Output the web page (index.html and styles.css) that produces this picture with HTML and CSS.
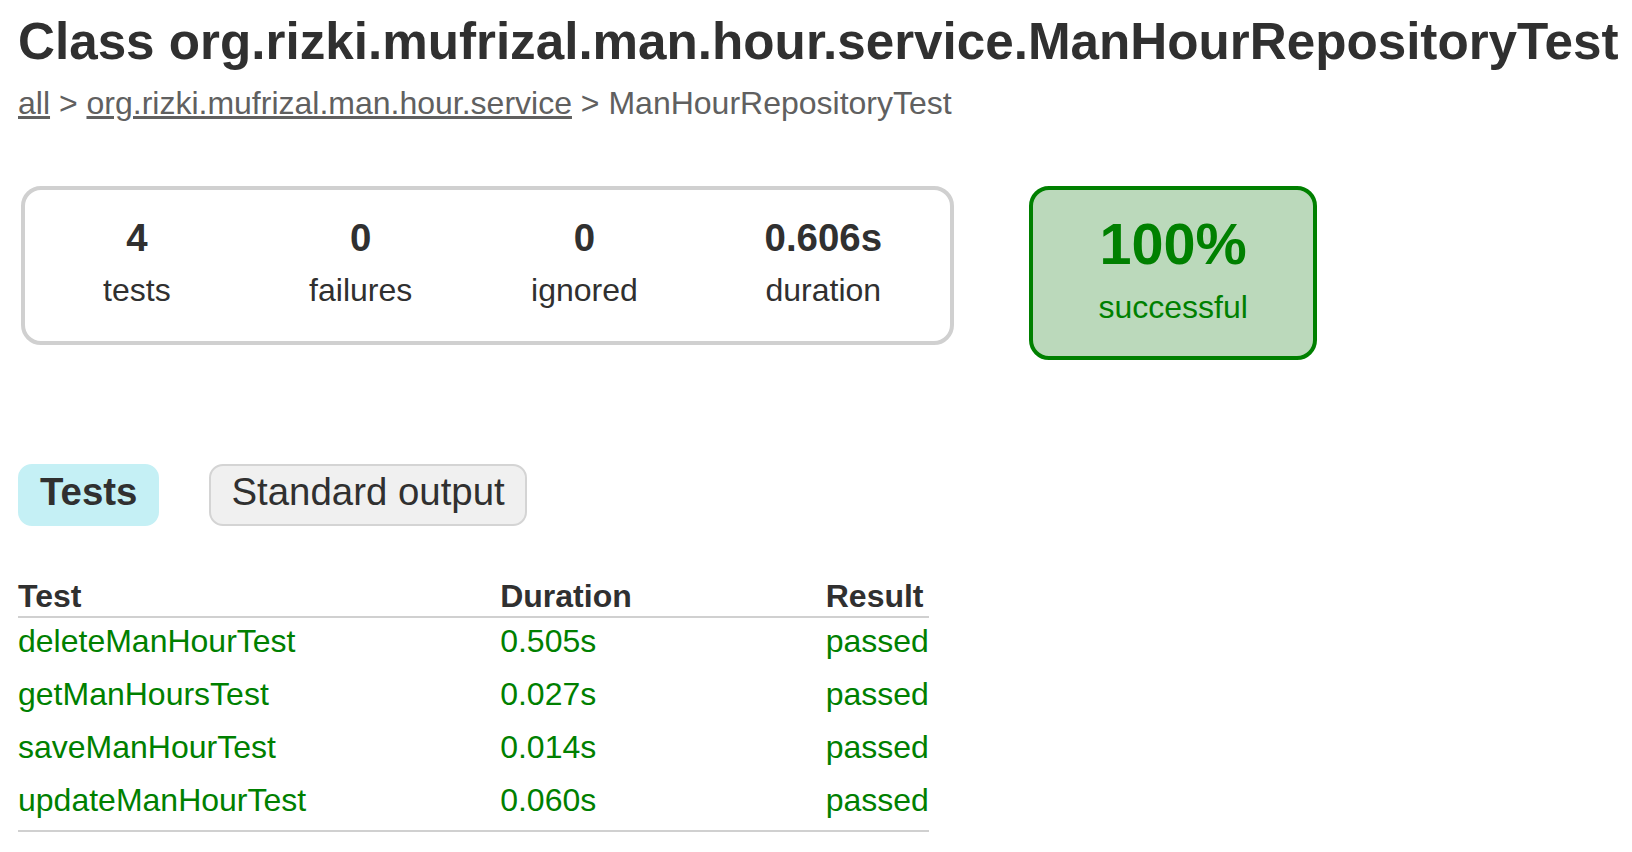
FILE: index.html
```
<!DOCTYPE html>
<html lang="en">
<head>
<meta charset="utf-8">
<title>Test results - Class org.rizki.mufrizal.man.hour.service.ManHourRepositoryTest</title>
<link rel="stylesheet" href="styles.css">
</head>
<body>
<div class="content">
  <h1 class="title">Class org.rizki.mufrizal.man.hour.service.ManHourRepositoryTest</h1>
  <div class="breadcrumbs"><a href="#">all</a> &gt; <a href="#">org.rizki.mufrizal.man.hour.service</a> &gt; ManHourRepositoryTest</div>

  <div class="summary">
    <div class="summary-group">
      <div class="info-box"><div class="counter">4</div><p>tests</p></div>
      <div class="info-box"><div class="counter">0</div><p>failures</p></div>
      <div class="info-box"><div class="counter">0</div><p>ignored</p></div>
      <div class="info-box info-duration"><div class="counter">0.606s</div><p>duration</p></div>
    </div>
    <div class="success-rate">
      <div class="percent">100%</div>
      <p>successful</p>
    </div>
  </div>

  <ul class="tab-links">
    <li class="tab tab-selected"><a href="#">Tests</a></li>
    <li class="tab"><a href="#">Standard output</a></li>
  </ul>

  <table class="results">
    <thead>
      <tr><th>Test</th><th>Duration</th><th>Result</th></tr>
    </thead>
    <tbody>
      <tr><td>deleteManHourTest</td><td>0.505s</td><td>passed</td></tr>
      <tr><td>getManHoursTest</td><td>0.027s</td><td>passed</td></tr>
      <tr><td>saveManHourTest</td><td>0.014s</td><td>passed</td></tr>
      <tr><td>updateManHourTest</td><td>0.060s</td><td>passed</td></tr>
    </tbody>
  </table>
</div>
</body>
</html>
```

FILE: styles.css
```
html, body {
  margin: 0;
  padding: 0;
  background: #ffffff;
}

body {
  font-family: "Liberation Sans", Arial, Helvetica, sans-serif;
  font-size: 32px;
  color: #303030;
}

.content {
  padding: 0 0 0 18px;
}

.title {
  margin: 0;
  padding-top: 16px;
  font-size: 51.2px;
  line-height: 52px;
  font-weight: bold;
  white-space: nowrap;
  color: #303030;
}

.breadcrumbs {
  margin-top: 19px;
  line-height: 32px;
  color: #606060;
  white-space: nowrap;
}

.breadcrumbs a {
  color: #606060;
  text-decoration: underline;
}

/* summary */
.summary {
  display: flex;
  align-items: flex-start;
  margin-top: 67px;
}

.summary-group {
  display: flex;
  margin-left: 3px;
  border: 4px solid #d0d0d0;
  border-radius: 20px;
}

.info-box {
  width: 223.8px;
  padding: 29px 0 35px;
  text-align: center;
}

.info-duration {
  width: 253.8px;
}

.info-box p,
.success-rate p {
  margin: 0;
  line-height: 32px;
}

.counter {
  font-size: 38.4px;
  line-height: 38.4px;
  font-weight: bold;
  margin-bottom: 16.4px;
}

.success-rate {
  width: 280px;
  margin-left: 75px;
  padding: 26.2px 0 33.1px;
  text-align: center;
  background-color: #bbd9bb;
  border: 4px solid #008000;
  border-radius: 20px;
  color: #008000;
}

.percent {
  font-size: 57.6px;
  line-height: 57.6px;
  font-weight: bold;
  margin-bottom: 17.1px;
}

/* tabs */
.tab-links {
  display: flex;
  gap: 50px;
  list-style: none;
  margin: 104px 0 0;
  padding: 0;
}

.tab {
  padding: 7px 20px 13px;
  border: 2px solid #d4d4d4;
  border-radius: 14px;
  background-color: #f0f0f0;
  font-size: 38.4px;
  line-height: 38.4px;
}

.tab a {
  color: #303030;
  text-decoration: none;
}

.tab-selected {
  padding-left: 20px;
  padding-right: 20px;
  background-color: #c5f0f5;
  border-color: #c5f0f5;
  font-weight: bold;
}

/* results table */
.results {
  margin-top: 52px;
  border-collapse: collapse;
  border-bottom: 2px solid #d0d0d0;
}

.results th {
  text-align: left;
  white-space: nowrap;
  font-weight: bold;
  line-height: 32px;
  padding: 2px 0 4px 194px;
  border-bottom: 2px solid #d0d0d0;
  color: #303030;
}

.results td {
  white-space: nowrap;
  line-height: 33px;
  padding: 7px 0 13px 194px;
  color: #008000;
}

.results th:first-child,
.results td:first-child {
  padding-left: 0;
}
```
